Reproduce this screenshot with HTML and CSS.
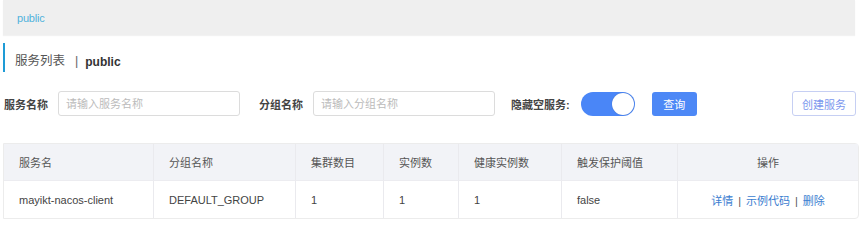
FILE: index.html
```html
<!DOCTYPE html>
<html lang="zh-CN">
<head>
    <meta charset="UTF-8">
    <meta name="viewport" content="width=device-width, initial-scale=1.0">
    <title>服务列表</title>
    <link rel="stylesheet" href="styles.css">
</head>
<body>

<div class="ns-bar">
    <span class="ns-item">public</span>
</div>

<h2 class="page-title">
    <span class="title-main">服务列表</span>
    <span class="title-sep">|</span>
    <span class="title-ns">public</span>
</h2>

<div class="search-row">
    <label class="field-label">服务名称</label>
    <input class="field-input" type="text" placeholder="请输入服务名称">
    <label class="field-label label-group">分组名称</label>
    <input class="field-input" type="text" placeholder="请输入分组名称">
    <label class="field-label label-hide">隐藏空服务:</label>
    <span class="switch on"><span class="knob"></span></span>
    <button class="btn btn-primary">查询</button>
    <button class="btn btn-outline">创建服务</button>
</div>

<table class="service-table">
    <thead>
        <tr>
            <th class="col-name">服务名</th>
            <th class="col-group">分组名称</th>
            <th class="col-cluster">集群数目</th>
            <th class="col-ins">实例数</th>
            <th class="col-healthy">健康实例数</th>
            <th class="col-threshold">触发保护阈值</th>
            <th class="col-ops">操作</th>
        </tr>
    </thead>
    <tbody>
        <tr>
            <td>mayikt-nacos-client</td>
            <td>DEFAULT_GROUP</td>
            <td>1</td>
            <td>1</td>
            <td>1</td>
            <td>false</td>
            <td class="ops">
                <a href="#">详情</a><span class="sep">|</span><a href="#">示例代码</a><span class="sep">|</span><a href="#">删除</a>
            </td>
        </tr>
    </tbody>
</table>

</body>
</html>
```

FILE: styles.css
```css
body {
    font-family: "Liberation Sans", "Noto Sans CJK SC", sans-serif;
    font-size: 11px;
    color: #333;
    background-color: #fff;
    margin: 0;
    padding: 0 5px 0 3px;
}
.ns-bar {
    background-color: #efefef;
    height: 35px;
    width: 852px;
    display: flex;
    align-items: center;
    padding-left: 14px;
    box-sizing: border-box;
    box-shadow: 0 1px 1px rgba(0, 0, 0, 0.05);
}
.ns-item {
    color: #4fb2dc;
    font-size: 11px;
    letter-spacing: -0.2px;
}
.page-title {
    margin: 8px 0 0;
    height: 29px;
    border-left: 2px solid #1e9bd6;
    padding-left: 10px;
    display: flex;
    align-items: center;
    font-size: 12.5px;
    font-weight: normal;
    line-height: 1;
    padding-top: 8px;
    box-sizing: border-box;
}
.title-main {
    color: #555;
}
.title-sep {
    margin: 0 7px 0 10px;
    color: #666;
}
.title-ns {
    color: #333;
    font-weight: bold;
    font-size: 12px;
}
.search-row {
    display: flex;
    align-items: center;
    margin-top: 19px;
    height: 25px;
    width: 853px;
}
.field-label {
    font-weight: bold;
    color: #444;
    margin-left: 1px;
    margin-right: 10px;
    white-space: nowrap;
}
.label-group {
    margin-left: 19px;
}
.label-hide {
    margin-left: 16px;
    margin-right: 11px;
}
.field-input {
    width: 182px;
    height: 25px;
    box-sizing: border-box;
    border: 1px solid #dcdcdc;
    border-radius: 3px;
    padding: 0 7px;
    font-family: inherit;
    font-size: 11px;
    color: #333;
}
.field-input::placeholder {
    color: #bbb;
}
.switch {
    width: 54px;
    height: 24px;
    border-radius: 12px;
    background-color: #4a86f7;
    position: relative;
    box-sizing: border-box;
}
.switch .knob {
    position: absolute;
    right: 1px;
    top: 1px;
    width: 22px;
    height: 22px;
    border-radius: 50%;
    background-color: #fff;
    box-shadow: 0 0 1px rgba(0, 0, 0, 0.3);
}
.btn {
    height: 24px;
    border-radius: 3px;
    font-family: inherit;
    font-size: 11px;
    padding: 0;
    cursor: pointer;
}
.btn-primary {
    margin-left: 17px;
    width: 45px;
    background-color: #4d88f6;
    color: #fff;
    border: none;
}
.btn-outline {
    margin-left: auto;
    width: 64px;
    height: 25px;
    background-color: #fff;
    color: #7b97ee;
    border: 1px solid #c6cff3;
}
.service-table {
    margin-top: 27px;
    width: 856px;
    border-collapse: separate;
    border-spacing: 0;
    border: 1px solid #ececec;
    border-radius: 0 4px 4px 0;
    table-layout: fixed;
    font-size: 11px;
}
.service-table th,
.service-table td {
    box-sizing: border-box;
    height: 37px;
    padding: 0 0 0 15px;
    text-align: left;
    border-right: 1px solid #eaeaee;
    white-space: nowrap;
    overflow: hidden;
}
.service-table th:last-child,
.service-table td:last-child {
    border-right: none;
}
.service-table th {
    background-color: #f2f3f7;
    font-weight: normal;
    color: #555;
    border-bottom: 1px solid #ececf0;
}
.service-table td {
    color: #444;
}
.col-name { width: 150px; }
.col-group { width: 142px; }
.col-cluster { width: 88px; }
.col-ins { width: 75px; }
.col-healthy { width: 103px; }
.col-threshold { width: 116px; }
.service-table th.col-ops,
.service-table td.ops {
    text-align: center;
    padding: 0;
}
.ops a {
    color: #3b7dd0;
    text-decoration: none;
}
.ops .sep {
    margin: 0 5px;
    color: #555;
}
```
